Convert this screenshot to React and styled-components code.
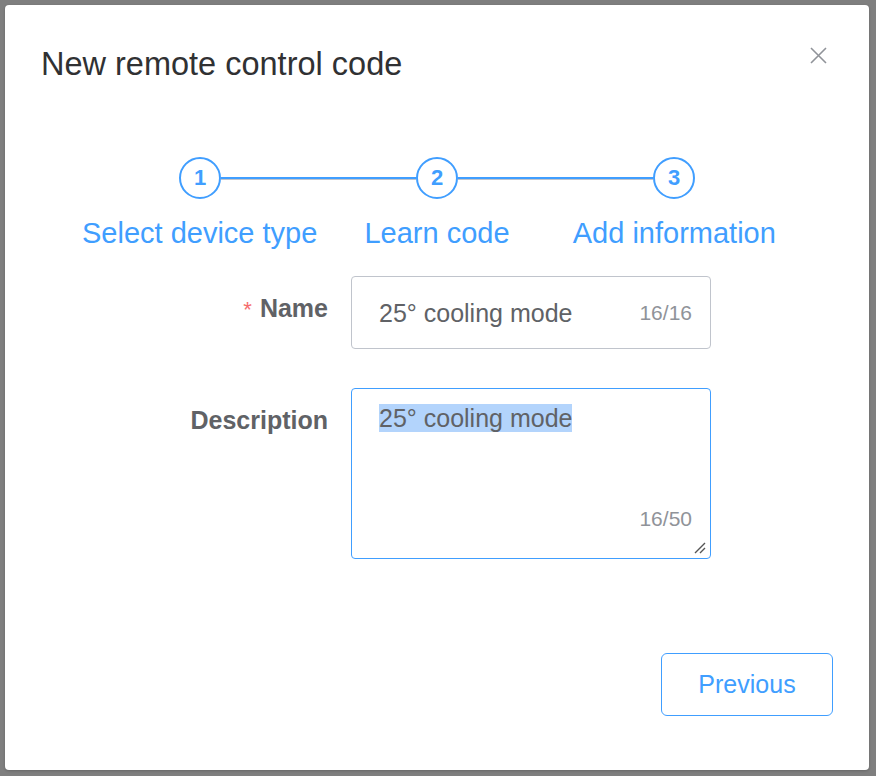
import React from 'react'
import styled, {createGlobalStyle} from 'styled-components'

const GlobalStyle = createGlobalStyle`
html, body {
  margin: 0;
  padding: 0;
  background: #7f7f7f;
  font-family: "Liberation Sans", Arial, sans-serif;
}
`

const Overlay = styled.div`
width: 876px;
height: 776px;
padding: 5px 7px 6px 5px;
box-sizing: border-box;
background: #7f7f7f;
`

const Modal = styled.div`
width: 864px;
height: 765px;
background: #fff;
border-radius: 4px;
display: flex;
flex-direction: column;
box-shadow: 0 1px 3px rgba(0,0,0,0.2);
`

const Header = styled.div`
display: flex;
justify-content: space-between;
align-items: flex-start;
padding: 43px 42px 0 36px;
`

const Title = styled.h2`
margin: 0;
font-size: 32.5px;
line-height: 32px;
font-weight: 400;
color: #303133;
`

const Close = styled.button`
border: none;
background: none;
padding: 0;
margin-top: -1px;
width: 17px;
height: 17px;
cursor: pointer;
display: flex;
`

const Steps = styled.div`
width: 712px;
margin: 77px auto 0;
`

const StepHeads = styled.div`
display: flex;
align-items: center;
padding: 0 98px;
`

const Circle = styled.div`
width: 42px;
height: 42px;
box-sizing: border-box;
border: 2px solid #409eff;
border-radius: 50%;
display: flex;
align-items: center;
justify-content: center;
font-size: 22px;
font-weight: 700;
color: #409eff;
`

const Line = styled.div`
flex: 1;
height: 2px;
background: #409eff;
box-shadow: 0 1px 0 #c0c4cc;
`

const StepTitles = styled.div`
display: grid;
grid-template-columns: repeat(3, 1fr);
margin-top: 18px;
`

const StepTitle = styled.div`
text-align: center;
font-size: 29px;
line-height: 32px;
color: #409eff;
white-space: nowrap;
`

const Form = styled.div`
display: flex;
flex-direction: column;
gap: 39px;
margin-top: 27px;
padding-left: 143px;
`

const Row = styled.div`
display: grid;
grid-template-columns: 180px 360px;
column-gap: 23px;
align-items: start;
`

const Label = styled.label`
text-align: right;
font-size: 25px;
line-height: 64px;
font-weight: 700;
color: #606266;
`

const Star = styled.span`
color: #f56c6c;
font-weight: 400;
margin-right: 8px;
font-size: 22px;
`

const Field = styled.div`
position: relative;
box-sizing: border-box;
height: ${p => p.$tall ? '171px' : '73px'};
border: 1px solid ${p => p.$focus ? '#409eff' : '#c0c4cc'};
border-radius: 4px;
padding: ${p => p.$tall ? '10px 18px 27px 27px' : '0 18px 0 27px'};
display: flex;
flex-direction: ${p => p.$tall ? 'column' : 'row'};
align-items: ${p => p.$tall ? 'stretch' : 'center'};
justify-content: space-between;
font-size: 25px;
color: #606266;
`

const Value = styled.div`
line-height: 38px;
`

const Selected = styled.span`
background: #b3d4fc;
`

const Count = styled.span`
font-size: 21px;
color: #909399;
text-align: right;
line-height: 24px;
`

const Grip = styled.svg`
position: absolute;
right: 3px;
bottom: 3px;
`

const Footer = styled.div`
margin-top: auto;
display: flex;
justify-content: flex-end;
padding: 0 36px 54px;
`

const Button = styled.button`
width: 172px;
height: 63px;
border: 1px solid #409eff;
border-radius: 6px;
background: #fff;
color: #409eff;
font-family: "Liberation Sans", Arial, sans-serif;
font-size: 25px;
cursor: pointer;
`

function App() {
  const steps = ['Select device type', 'Learn code', 'Add information']
  return (
    <>
      <GlobalStyle />
      <Overlay>
        <Modal>
          <Header>
            <Title>New remote control code</Title>
            <Close aria-label="Close">
              <svg width="17" height="17" viewBox="0 0 17 17">
                <path d="M1 1L16 16M16 1L1 16" stroke="#909399" strokeWidth="1.6" />
              </svg>
            </Close>
          </Header>
          <Steps>
            <StepHeads>
              <Circle>1</Circle>
              <Line />
              <Circle>2</Circle>
              <Line />
              <Circle>3</Circle>
            </StepHeads>
            <StepTitles>
              {steps.map(s => <StepTitle key={s}>{s}</StepTitle>)}
            </StepTitles>
          </Steps>
          <Form>
            <Row>
              <Label><Star>*</Star>Name</Label>
              <Field>
                <Value>25° cooling mode</Value>
                <Count>16/16</Count>
              </Field>
            </Row>
            <Row>
              <Label>Description</Label>
              <Field $tall $focus>
                <Value><Selected>25° cooling mode</Selected></Value>
                <Count>16/50</Count>
                <Grip width="14" height="14" viewBox="0 0 14 14">
                  <path d="M2 12L12 2M7 12L12 7" stroke="#555" strokeWidth="1.4" />
                </Grip>
              </Field>
            </Row>
          </Form>
          <Footer>
            <Button>Previous</Button>
          </Footer>
        </Modal>
      </Overlay>
    </>
  )
}

export default App
